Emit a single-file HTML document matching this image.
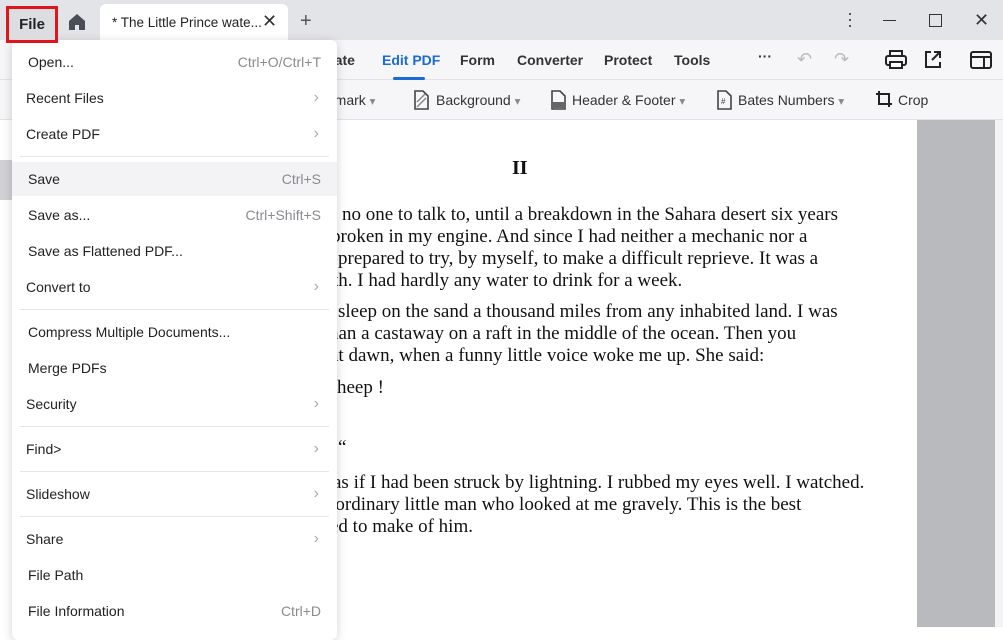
<!DOCTYPE html>
<html><head><meta charset="utf-8"><style>
*{margin:0;padding:0;box-sizing:border-box}
body{width:1003px;height:627px;overflow:hidden;position:relative;font-family:"Liberation Sans",sans-serif;background:#fff}
.abs{position:absolute}
#title{left:0;top:0;width:1003px;height:40px;background:#e3e4e7}
#tb1{left:0;top:40px;width:1003px;height:40px;background:#f6f6f8;border-bottom:1px solid #e2e2e5}
#tb2{left:0;top:80px;width:1003px;height:40px;background:#f6f6f8;border-bottom:1px solid #e2e2e5}
.t1{position:absolute;top:52px;font-size:14px;font-weight:bold;color:#333}
.t2{position:absolute;top:92px;font-size:14px;color:#333}
.doc{position:absolute;font-family:"Liberation Serif",serif;font-size:19px;color:#111;white-space:nowrap}
#menu{left:12px;top:40px;width:325px;height:600px;background:#fff;border-radius:6px;box-shadow:0 2px 10px rgba(0,0,0,.18);z-index:5}
.mi{position:absolute;left:0;width:325px;height:34px;font-size:14px;color:#222;line-height:34px}
.mi .l{position:absolute;left:16px}
.mi .r{position:absolute;right:16px;color:#8a8a90}
.mi .ch{position:absolute;right:18px;color:#aaa;font-size:16px}
.sep{position:absolute;left:8px;width:309px;height:1px;background:#e6e6e8}
</style></head><body>
<div id="title" class="abs"></div>
<div class="abs" style="left:6px;top:6px;width:52px;height:37px;border:3px solid #e0141c;background:#dcdde0;z-index:6;font-size:15px;font-weight:bold;line-height:31px;text-align:center;color:#222">File</div>
<svg class="abs" style="left:67px;top:12px" width="20" height="20" viewBox="0 0 20 20"><path d="M2 9 L10 2 L18 9 V18 H12 V13 H8 V18 H2Z" fill="#4a4d55"/></svg>
<div class="abs" style="left:100px;top:4px;width:188px;height:38px;background:#fff;border-radius:6px 6px 0 0"></div>
<div class="abs" style="left:112px;top:15px;font-size:13.5px;color:#222">* The Little Prince wate...</div>
<div class="abs" style="left:262px;top:11px;font-size:18px;color:#333">✕</div>
<div class="abs" style="left:300px;top:10px;font-size:20px;color:#555">+</div>
<div class="abs" style="left:847px;top:10px;font-size:18px;color:#444;line-height:6px">·<br>·<br>·</div>
<div class="abs" style="left:883px;top:20px;width:13px;height:1px;background:#333"></div>
<div class="abs" style="left:929px;top:14px;width:13px;height:13px;border:1px solid #333"></div>
<div class="abs" style="left:974px;top:10px;font-size:18px;color:#333">✕</div>
<div id="tb1" class="abs"></div>
<span class="t1" style="left:330px">tate</span>
<span class="t1" style="left:382px;color:#1a6bd6">Edit PDF</span>
<div class="abs" style="left:393px;top:77px;width:32px;height:3px;background:#1a6bd6;border-radius:2px"></div>
<span class="t1" style="left:460px">Form</span>
<span class="t1" style="left:517px">Converter</span>
<span class="t1" style="left:604px">Protect</span>
<span class="t1" style="left:674px">Tools</span>
<span class="t1" style="left:758px;top:48px">···</span>
<span class="abs" style="left:797px;top:49px;font-size:18px;color:#bbb">↶</span>
<span class="abs" style="left:834px;top:49px;font-size:18px;color:#bbb">↷</span>
<svg class="abs" style="left:885px;top:50px" width="22" height="20" viewBox="0 0 22 20"><rect x="5" y="1" width="12" height="5" fill="none" stroke="#222" stroke-width="2"/><rect x="1" y="6" width="20" height="9" rx="2" fill="none" stroke="#222" stroke-width="2"/><rect x="5" y="12" width="12" height="6" fill="#fff" stroke="#222" stroke-width="2"/></svg>
<svg class="abs" style="left:923px;top:50px" width="20" height="20" viewBox="0 0 20 20"><path d="M8 2H3V17H17V12M11 2H17V8M17 2L9 10" fill="none" stroke="#222" stroke-width="2"/></svg>
<svg class="abs" style="left:970px;top:51px" width="22" height="18" viewBox="0 0 22 18"><rect x="1" y="1" width="20" height="16" rx="2" fill="none" stroke="#222" stroke-width="2"/><path d="M1 6H21M14 6V17" stroke="#222" stroke-width="2"/></svg>
<div id="tb2" class="abs"></div>
<span class="t2" style="left:330px">rmark <small style="color:#888">▾</small></span>
<svg class="abs" style="left:413px;top:90px" width="16" height="20"><path d="M2 1H10L15 6V19H2Z" fill="none" stroke="#444" stroke-width="1.6"/><path d="M4 12L12 4M4 17L13 8" stroke="#888" stroke-width="1.5"/></svg>
<span class="t2" style="left:436px">Background <small style="color:#888">▾</small></span>
<svg class="abs" style="left:550px;top:90px" width="16" height="20"><path d="M2 1H10L15 6V19H2Z" fill="none" stroke="#444" stroke-width="1.6"/><rect x="3" y="12" width="11" height="6" fill="#666"/></svg>
<span class="t2" style="left:572px">Header &amp; Footer <small style="color:#888">▾</small></span>
<svg class="abs" style="left:716px;top:90px" width="16" height="20"><path d="M2 1H10L15 6V19H2Z" fill="none" stroke="#444" stroke-width="1.6"/><text x="5" y="14" font-size="8" fill="#444" font-family="Liberation Sans">#</text></svg>
<span class="t2" style="left:738px">Bates Numbers <small style="color:#888">▾</small></span>
<svg class="abs" style="left:875px;top:90px" width="18" height="18"><path d="M4 1V14H17M1 4H14V17" fill="none" stroke="#222" stroke-width="2"/></svg>
<span class="t2" style="left:898px">Crop</span>
<div class="abs" style="left:0;top:120px;width:1003px;height:507px;background:#fff"></div>
<div class="abs" style="left:917px;top:120px;width:78px;height:507px;background:#b8babe"></div>
<div class="abs" style="left:995px;top:120px;width:8px;height:507px;background:#f3f3f5"></div>
<div class="abs" style="left:0;top:160px;width:12px;height:40px;background:#d0d1d4"></div>
<div class="doc" style="left:512px;top:157px;font-weight:bold;font-size:20px">II</div>
<div class="doc" style="left:342px;top:204px">no one to talk to, until a breakdown in the Sahara desert six years</div>
<div class="doc" style="left:331px;top:226px">broken in my engine. And since I had neither a mechanic nor a</div>
<div class="doc" style="left:338px;top:248px">prepared to try, by myself, to make a difficult reprieve. It was a</div>
<div class="doc" style="left:333px;top:270px">th. I had hardly any water to drink for a week.</div>
<div class="doc" style="left:338px;top:301px">sleep on the sand a thousand miles from any inhabited land. I was</div>
<div class="doc" style="left:329px;top:323px">han a castaway on a raft in the middle of the ocean. Then you</div>
<div class="doc" style="left:330px;top:345px">at dawn, when a funny little voice woke me up. She said:</div>
<div class="doc" style="left:337px;top:377px">heep !</div>
<div class="doc" style="left:338px;top:437px">“</div>
<div class="doc" style="left:333px;top:472px">as if I had been struck by lightning. I rubbed my eyes well. I watched.</div>
<div class="doc" style="left:327px;top:494px">aordinary little man who looked at me gravely. This is the best</div>
<div class="doc" style="left:330px;top:516px">ed to make of him.</div>
<div id="menu" class="abs">
<div class="mi" style="top:5px"><span class="l">Open...</span><span class="r">Ctrl+O/Ctrl+T</span></div>
<div class="mi" style="top:41px"><span class="l" style="left:14px">Recent Files</span><span class="ch">›</span></div>
<div class="mi" style="top:77px"><span class="l" style="left:14px">Create PDF</span><span class="ch">›</span></div>
<div class="sep" style="top:116px"></div>
<div class="mi" style="top:122px;background:#f3f3f5"><span class="l">Save</span><span class="r">Ctrl+S</span></div>
<div class="mi" style="top:158px"><span class="l">Save as...</span><span class="r">Ctrl+Shift+S</span></div>
<div class="mi" style="top:194px"><span class="l">Save as Flattened PDF...</span></div>
<div class="mi" style="top:230px"><span class="l" style="left:14px">Convert to</span><span class="ch">›</span></div>
<div class="sep" style="top:269px"></div>
<div class="mi" style="top:275px"><span class="l">Compress Multiple Documents...</span></div>
<div class="mi" style="top:311px"><span class="l">Merge PDFs</span></div>
<div class="mi" style="top:347px"><span class="l" style="left:14px">Security</span><span class="ch">›</span></div>
<div class="sep" style="top:386px"></div>
<div class="mi" style="top:392px"><span class="l" style="left:14px">Find&gt;</span><span class="ch">›</span></div>
<div class="sep" style="top:431px"></div>
<div class="mi" style="top:437px"><span class="l" style="left:14px">Slideshow</span><span class="ch">›</span></div>
<div class="sep" style="top:476px"></div>
<div class="mi" style="top:482px"><span class="l" style="left:14px">Share</span><span class="ch">›</span></div>
<div class="mi" style="top:518px"><span class="l">File Path</span></div>
<div class="mi" style="top:554px"><span class="l">File Information</span><span class="r">Ctrl+D</span></div>
</div>
</body></html>
